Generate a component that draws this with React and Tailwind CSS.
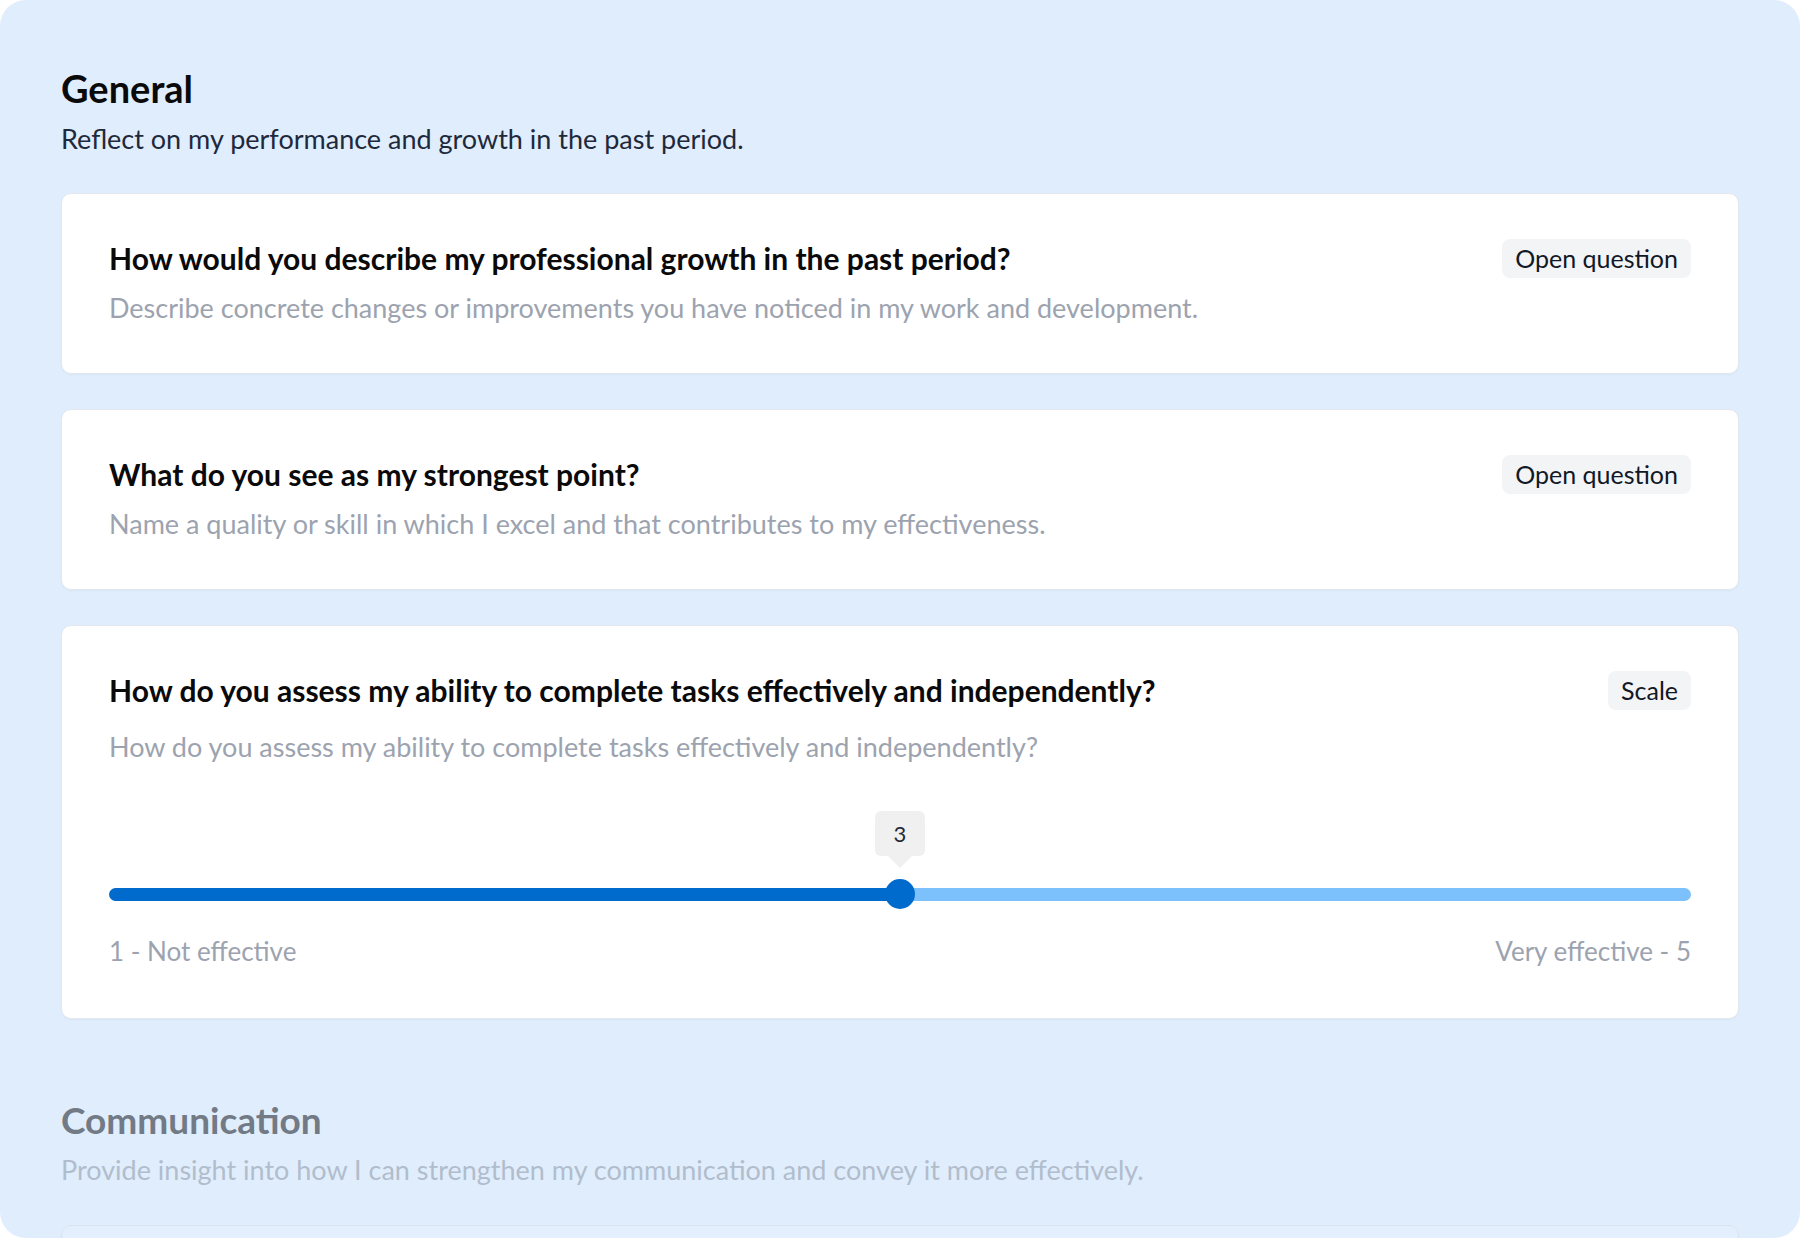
import React from 'react';

const questions = [
  {
    title: 'How would you describe my professional growth in the past period?',
    text: 'Describe concrete changes or improvements you have noticed in my work and development.',
    type: 'Open question',
  },
  {
    title: 'What do you see as my strongest point?',
    text: 'Name a quality or skill in which I excel and that contributes to my effectiveness.',
    type: 'Open question',
  },
];

const Badge = ({ children }) => (
  <span className="shrink-0 rounded-[8px] bg-[#f3f4f6] px-[13px] text-[25px] leading-[39px] text-[#111827]">
    {children}
  </span>
);

const QuestionCard = ({ title, text, type, children, descGap = 'mt-[13px]' }) => (
  <div className="rounded-[10px] border border-[#e3e8ef] bg-white px-[47px] pt-[45px] pb-[48px] shadow-[0_1px_2px_rgba(15,23,42,0.04)]">
    <div className="flex items-start justify-between gap-6">
      <h3 className="text-[30px] font-bold leading-[38px] text-[#0a0a0a]">{title}</h3>
      <Badge>{type}</Badge>
    </div>
    <p className={`${descGap} text-[27px] leading-[34px] text-[#9ca3af]`}>{text}</p>
    {children}
  </div>
);

const ScaleSlider = ({ value = 3, min = 1, max = 5 }) => {
  const pct = ((value - min) / (max - min)) * 100;
  return (
    <div className="pb-[3px]">
      <div className="relative mt-[115px] flex h-[30px] items-center">
        <div className="flex h-[13px] w-full overflow-hidden rounded-full">
          <div className="h-full bg-[#006bcc]" style={{ width: `${pct}%` }} />
          <div className="h-full flex-1 bg-[#7cc0fc]" />
        </div>
        <div
          className="absolute top-0 h-[30px] w-[30px] -translate-x-1/2 rounded-full bg-[#006bcc]"
          style={{ left: `${pct}%` }}
        />
        <div
          className="absolute top-[-68px] flex -translate-x-1/2 flex-col items-center"
          style={{ left: `${pct}%` }}
        >
          <div className="flex h-[45px] w-[50px] items-center justify-center rounded-[6px] bg-[#f0f0f0] text-[22px] text-[#1f2937]">
            {value}
          </div>
          <div className="h-0 w-0 border-x-[12px] border-t-[12px] border-x-transparent border-t-[#f0f0f0]" />
        </div>
      </div>
      <div className="mt-[26px] flex justify-between text-[26px] leading-[32px] text-[#9ca3af]">
        <span>1 - Not effective</span>
        <span>Very effective - 5</span>
      </div>
    </div>
  );
};

export default function App() {
  return (
    <div className="min-h-screen bg-white" style={{ fontFamily: 'Lato, "Noto Sans", sans-serif' }}>
      <div className="h-[1238px] overflow-hidden rounded-[26px] bg-[#e0edfd] px-[61px] pt-[65px]">
        <h2 className="text-[38px] font-bold leading-[46px] text-[#0a0a0a]">General</h2>
        <p className="mt-[11px] text-[27px] leading-[34px] text-[#1e293b]">
          Reflect on my performance and growth in the past period.
        </p>

        <div className="mt-[37px] flex flex-col gap-[35px]">
          {questions.map((q) => (
            <QuestionCard key={q.title} {...q} />
          ))}
          <QuestionCard
            title="How do you assess my ability to complete tasks effectively and independently?"
            text="How do you assess my ability to complete tasks effectively and independently?"
            type="Scale"
            descGap="mt-[20px]"
          >
            <ScaleSlider value={3} />
          </QuestionCard>
        </div>

        <div className="mt-[78px]">
          <h2 className="text-[37px] font-bold leading-[46px] text-[#717a85]">Communication</h2>
          <p className="mt-[10px] text-[27px] leading-[34px] text-[#b1bdcc]">
            Provide insight into how I can strengthen my communication and convey it more effectively.
          </p>
          <div className="mt-[38px] h-[120px] rounded-[10px] border border-[#d9e4f2] bg-[#e4effd]" />
        </div>
      </div>
    </div>
  );
}
